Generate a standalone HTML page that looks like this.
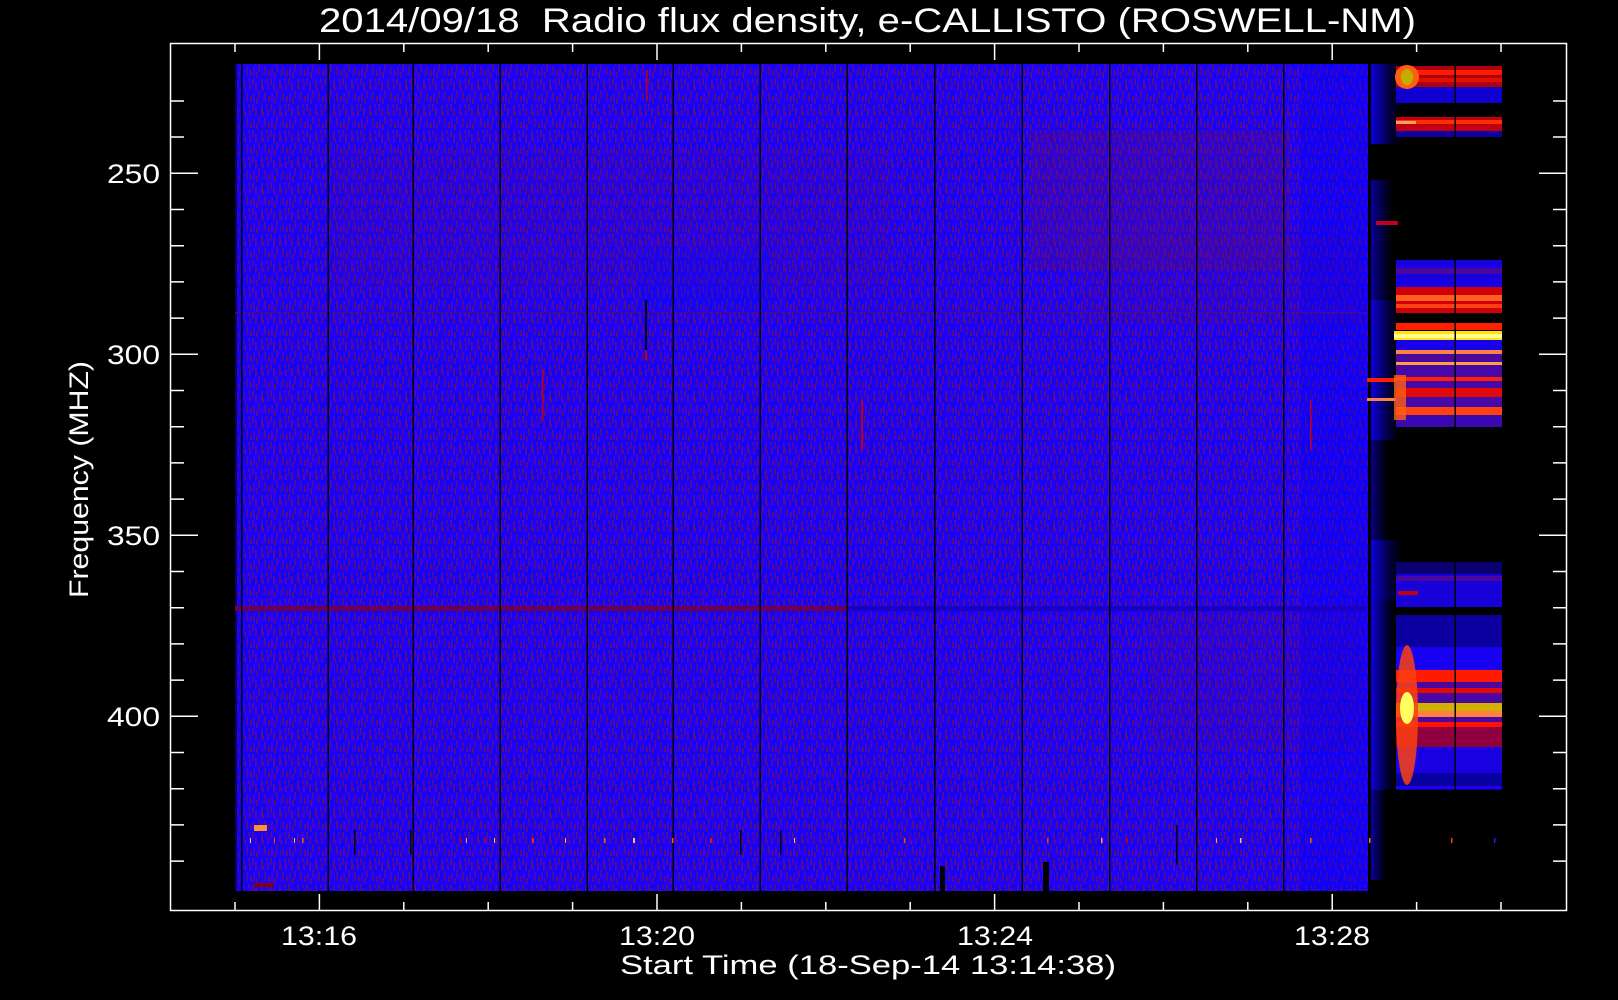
<!DOCTYPE html>
<html><head><meta charset="utf-8"><style>
html,body{margin:0;padding:0;background:#000;width:1618px;height:1000px;overflow:hidden}
svg{display:block}
text{fill:#fff;font-family:"Liberation Sans",sans-serif;font-weight:normal}
</style></head><body>
<svg width="1618" height="1000" viewBox="0 0 1618 1000" xmlns="http://www.w3.org/2000/svg">
<defs>
<pattern id="nz" x="0" y="0" width="18" height="26" patternUnits="userSpaceOnUse">
<rect width="18" height="26" fill="#1600ff"/>
<rect x="0" y="0" width="2" height="7" fill="#4c0aa6"/>
<rect x="3" y="4" width="2" height="9" fill="#560a90"/>
<rect x="6" y="12" width="2" height="8" fill="#4a08b0"/>
<rect x="9" y="1" width="2" height="10" fill="#5a0c86"/>
<rect x="12" y="14" width="2" height="9" fill="#4e0aa0"/>
<rect x="15" y="5" width="2" height="7" fill="#520a98"/>
<rect x="1" y="15" width="2" height="9" fill="#480ab0"/>
<rect x="4" y="20" width="2" height="6" fill="#5a0a88"/>
<rect x="10" y="17" width="1" height="8" fill="#3e08c0"/>
<rect x="14" y="0" width="2" height="4" fill="#4a0aa8"/>
<rect x="16" y="18" width="2" height="6" fill="#560a90"/>
<rect x="11" y="8" width="1" height="5" fill="#6a0a70"/>
</pattern>
<linearGradient id="fr" x1="0" x2="1" y1="0" y2="0">
<stop offset="0" stop-color="#1000ff" stop-opacity="0.9"/>
<stop offset="1" stop-color="#0000a0" stop-opacity="0"/>
</linearGradient>
</defs>

<rect x="235" y="64" width="1133" height="827" fill="url(#nz)"/>
<rect x="1030" y="130" width="260" height="140" fill="#6a0a60" opacity="0.25"/>
<rect x="330" y="150" width="560" height="140" fill="#600a70" opacity="0.12"/>
<rect x="1080" y="235" width="280" height="90" fill="#600a70" opacity="0.15"/>
<rect x="1150" y="610" width="210" height="140" fill="#600a70" opacity="0.15"/>
<rect x="640" y="250" width="130" height="60" fill="#0010ff" opacity="0.25"/>
<rect x="1300" y="64" width="68" height="827" fill="#0000ff" opacity="0.35"/>
<rect x="235" y="64" width="10" height="827" fill="#1000ff" opacity="0.5"/>
<rect x="235" y="64" width="2" height="827" fill="#000" opacity="0.6"/>
<rect x="235" y="312" width="1133" height="2" fill="#5a0a80" opacity="0.6"/>
<rect x="235" y="606" width="612" height="5" fill="#6a0050"/>
<rect x="847" y="606" width="520" height="5" fill="#1a00c0"/>
<g fill="#000">
<rect x="241" y="64" width="1.5" height="827"/>
<rect x="327.5" y="64" width="1.5" height="827"/>
<rect x="412.5" y="64" width="1.5" height="827"/>
<rect x="499.5" y="64" width="1.5" height="827"/>
<rect x="586.5" y="64" width="1.5" height="827"/>
<rect x="672.5" y="64" width="1.5" height="827"/>
<rect x="759.5" y="64" width="1.5" height="827"/>
<rect x="846.5" y="64" width="1.5" height="827"/>
<rect x="934" y="64" width="1.5" height="827"/>
<rect x="1021.5" y="64" width="1.5" height="827"/>
<rect x="1109" y="64" width="1.5" height="827"/>
<rect x="1196" y="64" width="1.5" height="827"/>
<rect x="1283" y="64" width="1.5" height="827"/>
<rect x="1369" y="64" width="1.5" height="827"/>
</g>
<g fill="#c00010">
<rect x="646" y="70" width="1.5" height="30"/>
<rect x="861" y="400" width="2" height="50"/>
<rect x="542" y="370" width="1.5" height="50"/>
<rect x="645" y="350" width="2" height="10"/>
<rect x="1310" y="400" width="1.5" height="50"/>
</g>
<rect x="645" y="300" width="2" height="50" fill="#000"/>
<g>
<rect x="254" y="825" width="13" height="6" fill="#ff9030"/>
<rect x="254" y="883" width="20" height="4" fill="#800010"/>
<rect x="250" y="838" width="1" height="5" fill="#ffc060"/>
<rect x="274" y="838" width="1" height="5" fill="#ff4000"/>
<rect x="294" y="838" width="1" height="5" fill="#ffc060"/>
<rect x="302" y="838" width="1.5" height="5" fill="#ff6000"/>
<rect x="460" y="838" width="1.5" height="5" fill="#c00000"/>
<rect x="466" y="838" width="1" height="5" fill="#ffa040"/>
<rect x="485" y="838" width="1.5" height="5" fill="#c00000"/>
<rect x="494" y="838" width="1" height="5" fill="#ffc060"/>
<rect x="532" y="838" width="2" height="5" fill="#ff2000"/>
<rect x="565" y="838" width="1" height="5" fill="#ffc060"/>
<rect x="604" y="838" width="1.5" height="5" fill="#ff6000"/>
<rect x="633" y="838" width="2" height="5" fill="#ffc040"/>
<rect x="672" y="838" width="1.5" height="5" fill="#ff6000"/>
<rect x="710" y="838" width="1.5" height="5" fill="#ff2000"/>
<rect x="794" y="838" width="1" height="5" fill="#ffc060"/>
<rect x="904" y="838" width="1.5" height="5" fill="#ff4000"/>
<rect x="1047" y="838" width="1.5" height="5" fill="#ff4000"/>
<rect x="1101" y="838" width="1.5" height="5" fill="#ffa040"/>
<rect x="1126" y="838" width="2" height="5" fill="#c00000"/>
<rect x="1216" y="838" width="1" height="5" fill="#ffa040"/>
<rect x="1240" y="838" width="1.5" height="5" fill="#ffc060"/>
<rect x="1310" y="838" width="1.5" height="5" fill="#ff6000"/>
<rect x="1369" y="838" width="1.5" height="5" fill="#ff8000"/>
<rect x="1451" y="838" width="1.5" height="5" fill="#ff4000"/>
<rect x="1494" y="838" width="1.5" height="5" fill="#2020ff"/>
</g>
<g fill="#000">
<rect x="354" y="830" width="1.5" height="25"/>
<rect x="410" y="830" width="1.5" height="25"/>
<rect x="740" y="830" width="1.5" height="25"/>
<rect x="780" y="830" width="1.5" height="25"/>
<rect x="1176" y="825" width="1.5" height="40"/>
<rect x="940" y="866" width="5" height="25"/>
<rect x="1043" y="862" width="6" height="29"/>
</g>

<g>
<rect x="1371" y="64" width="30" height="80" fill="url(#fr)"/>
<rect x="1371" y="180" width="22" height="120" fill="url(#fr)" opacity="0.7"/>
<rect x="1371" y="300" width="28" height="140" fill="url(#fr)"/>
<rect x="1371" y="440" width="18" height="100" fill="url(#fr)" opacity="0.6"/>
<rect x="1371" y="540" width="30" height="60" fill="url(#fr)"/>
<rect x="1371" y="600" width="24" height="190" fill="url(#fr)"/>
<rect x="1371" y="790" width="16" height="90" fill="url(#fr)" opacity="0.7"/>
<rect x="1376" y="221" width="22" height="4" fill="#c00020"/>
<rect x="1367" y="378" width="30" height="4" fill="#ff2000"/>
<rect x="1367" y="398" width="30" height="3" fill="#ff8040"/>
<rect x="1396" y="66" width="106" height="21" fill="#b00010"/>
<rect x="1396" y="70" width="106" height="5" fill="#ff1a00"/>
<rect x="1396" y="78" width="106" height="4" fill="#e01000"/>
<rect x="1396" y="87" width="106" height="16" fill="#1000d0"/>
<ellipse cx="1407" cy="77" rx="12" ry="12" fill="#ff6010"/>
<ellipse cx="1407" cy="77" rx="6" ry="8" fill="#c0b000"/>
<rect x="1396" y="117" width="106" height="20" fill="#c00010"/>
<rect x="1396" y="120" width="106" height="4" fill="#ff3000"/>
<rect x="1396" y="131" width="106" height="6" fill="#1000a0"/>
<rect x="1396" y="121" width="20" height="3" fill="#ffa060"/>
<rect x="1396" y="260" width="106" height="27" fill="#1800e0"/>
<rect x="1396" y="268" width="106" height="6" fill="#4a08a0"/>
<rect x="1396" y="287" width="106" height="26" fill="#d00008"/>
<rect x="1396" y="295" width="106" height="6" fill="#ff6020"/>
<rect x="1396" y="304" width="106" height="4" fill="#ff4010"/>
<rect x="1396" y="323" width="106" height="7" fill="#ff2000"/>
<rect x="1394" y="331" width="108" height="9" fill="#ffe020"/>
<rect x="1394" y="334" width="108" height="4" fill="#ffff80"/>
<rect x="1396" y="340" width="106" height="10" fill="#1800e8"/>
<rect x="1396" y="350" width="106" height="4" fill="#ff8040"/>
<rect x="1396" y="354" width="106" height="8" fill="#4a08a0"/>
<rect x="1396" y="362" width="106" height="3" fill="#ffa040"/>
<rect x="1396" y="365" width="106" height="12" fill="#4808a8"/>
<rect x="1396" y="377" width="106" height="4" fill="#ff2000"/>
<rect x="1396" y="381" width="106" height="7" fill="#4808a8"/>
<rect x="1396" y="388" width="106" height="9" fill="#e00808"/>
<rect x="1396" y="397" width="106" height="10" fill="#4808a8"/>
<rect x="1396" y="407" width="106" height="8" fill="#ff4010"/>
<rect x="1396" y="415" width="106" height="12" fill="#3a08b0"/>
<rect x="1394" y="375" width="12" height="45" fill="#ff6010" opacity="0.8"/>
<rect x="1396" y="562" width="106" height="12" fill="#0a0070"/>
<rect x="1396" y="574" width="106" height="33" fill="#1800d8"/>
<rect x="1396" y="576" width="106" height="5" fill="#4a08a0"/>
<rect x="1398" y="591" width="20" height="4" fill="#c00010"/>
<rect x="1396" y="615" width="106" height="32" fill="#0c00a0"/>
<rect x="1396" y="647" width="106" height="23" fill="#1800f0"/>
<rect x="1396" y="670" width="106" height="12" fill="#ff1a00"/>
<rect x="1396" y="682" width="106" height="6" fill="#4a08a0"/>
<rect x="1396" y="688" width="106" height="5" fill="#e00808"/>
<rect x="1396" y="693" width="106" height="10" fill="#4a08a0"/>
<rect x="1396" y="703" width="106" height="8" fill="#d0b000"/>
<rect x="1396" y="711" width="106" height="6" fill="#ff8040"/>
<rect x="1396" y="717" width="106" height="5" fill="#4a08a0"/>
<rect x="1396" y="722" width="106" height="5" fill="#ff1000"/>
<rect x="1396" y="727" width="106" height="20" fill="#900040"/>
<rect x="1396" y="747" width="106" height="26" fill="#1800e0"/>
<rect x="1396" y="773" width="106" height="17" fill="#0800a0"/>
<rect x="1396" y="786" width="106" height="3" fill="#2000f0"/>
<ellipse cx="1407" cy="715" rx="11" ry="70" fill="#ff4010" opacity="0.85"/>
<ellipse cx="1407" cy="708" rx="7" ry="16" fill="#ffff60"/>
<rect x="1454.5" y="64" width="1.5" height="726" fill="#000"/>
</g>

<rect x="170.5" y="43.5" width="1396" height="867" fill="none" stroke="#fff" stroke-width="1.5"/>
<g stroke="#fff" stroke-width="1.5">
<path d="M235 911v-9M235 43v9M319.4 911v-17M319.4 43v17M403.8 911v-9M403.8 43v9M488.2 911v-9M488.2 43v9M572.6 911v-9M572.6 43v9M657 911v-17M657 43v17M741.4 911v-9M741.4 43v9M825.8 911v-9M825.8 43v9M910.2 911v-9M910.2 43v9M994.6 911v-17M994.6 43v17M1079 911v-9M1079 43v9M1163.4 911v-9M1163.4 43v9M1247.8 911v-9M1247.8 43v9M1332.2 911v-17M1332.2 43v17M1416.6 911v-9M1416.6 43v9M1501 911v-9M1501 43v9"/>
<path d="M170 101h14M1567 101h-14M170 137h14M1567 137h-14M170 173.3h28M1567 173.3h-28M170 209.5h14M1567 209.5h-14M170 245.7h14M1567 245.7h-14M170 281.9h14M1567 281.9h-14M170 318.1h14M1567 318.1h-14M170 354.3h28M1567 354.3h-28M170 390.5h14M1567 390.5h-14M170 426.7h14M1567 426.7h-14M170 462.9h14M1567 462.9h-14M170 499.1h14M1567 499.1h-14M170 535.3h28M1567 535.3h-28M170 571.5h14M1567 571.5h-14M170 607.7h14M1567 607.7h-14M170 643.9h14M1567 643.9h-14M170 680.1h14M1567 680.1h-14M170 716.3h28M1567 716.3h-28M170 752.5h14M1567 752.5h-14M170 788.7h14M1567 788.7h-14M170 824.9h14M1567 824.9h-14M170 861.1h14M1567 861.1h-14"/>
</g>

<text x="319" y="32" font-size="34" textLength="1097" lengthAdjust="spacingAndGlyphs">2014/09/18&#160; Radio flux density, e-CALLISTO (ROSWELL-NM)</text>
<g font-size="27">
<text x="107" y="183" textLength="53" lengthAdjust="spacingAndGlyphs">250</text>
<text x="107" y="364" textLength="53" lengthAdjust="spacingAndGlyphs">300</text>
<text x="107" y="545" textLength="53" lengthAdjust="spacingAndGlyphs">350</text>
<text x="107" y="726" textLength="53" lengthAdjust="spacingAndGlyphs">400</text>
<text x="281" y="945" textLength="76" lengthAdjust="spacingAndGlyphs">13:16</text>
<text x="619" y="945" textLength="76" lengthAdjust="spacingAndGlyphs">13:20</text>
<text x="957" y="945" textLength="76" lengthAdjust="spacingAndGlyphs">13:24</text>
<text x="1294" y="945" textLength="76" lengthAdjust="spacingAndGlyphs">13:28</text>
<text x="620" y="974" textLength="496" lengthAdjust="spacingAndGlyphs">Start Time (18-Sep-14 13:14:38)</text>
<text transform="translate(88,598) rotate(-90)" x="0" y="0" textLength="237" lengthAdjust="spacingAndGlyphs">Frequency (MHZ)</text>
</g>
</svg>
</body></html>
